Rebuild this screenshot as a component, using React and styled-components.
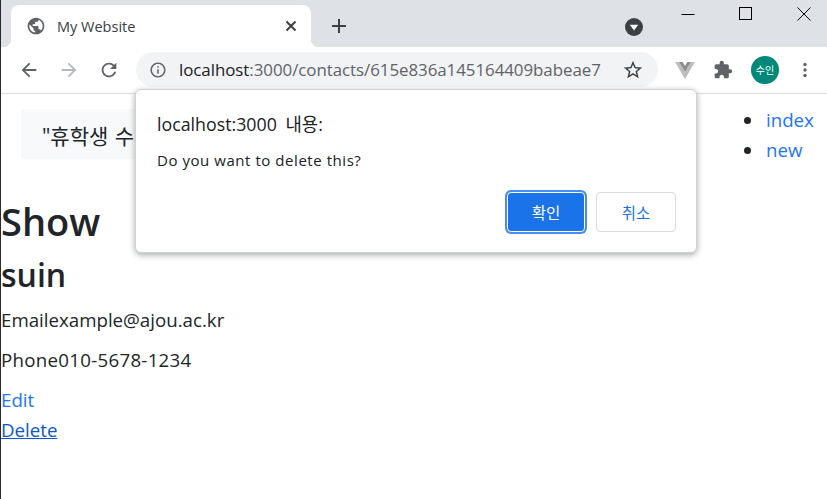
import React from "react";
import styled, { createGlobalStyle } from "styled-components";

const GlobalStyle = createGlobalStyle`
  html, body {
    margin: 0;
    padding: 0;
    background: #fff;
    overflow: hidden;
  }
  * { box-sizing: border-box; }
`;

const FONT = `"Open Sans", "Noto Sans CJK KR", sans-serif`;

const Window = styled.div`
  width: 827px;
  height: 499px;
  position: relative;
  overflow: hidden;
  border-left: 1px solid #2a2a2a;
  font-family: ${FONT};
  color: #212529;
`;

const TabStrip = styled.div`
  height: 47px;
  background: #dee1e6;
  display: flex;
  align-items: flex-end;
  padding-left: 10px;
`;

const Tab = styled.div`
  position: relative;
  width: 300px;
  height: 42px;
  background: #fff;
  border-radius: 8px 8px 0 0;
  display: flex;
  align-items: center;
  padding: 0 14px 0 15px;
  gap: 11px;

  &::before,
  &::after {
    content: "";
    position: absolute;
    bottom: 0;
    width: 8px;
    height: 8px;
  }
  &::before {
    left: -8px;
    background: radial-gradient(circle at 0 0, transparent 8px, #fff 8.5px);
  }
  &::after {
    right: -8px;
    background: radial-gradient(circle at 100% 0, transparent 8px, #fff 8.5px);
  }
`;

const TabTitle = styled.span`
  flex: 1;
  font-size: 14.5px;
  color: #3c4043;
`;

const NewTab = styled.div`
  display: flex;
  width: 28px;
  height: 42px;
  align-items: center;
  justify-content: center;
  margin-left: 14px;
`;

const StripSpacer = styled.div`
  flex: 1;
`;

const TabSearch = styled.div`
  align-self: flex-start;
  margin: 18px 16px 0 0;
  display: flex;
`;

const WindowControls = styled.div`
  align-self: flex-start;
  display: flex;
  margin-right: -6px;
`;

const WindowButton = styled.div`
  width: 58px;
  height: 27px;
  display: flex;
  align-items: center;
  justify-content: center;
`;

const Toolbar = styled.div`
  height: 47px;
  background: #fff;
  border-bottom: 1px solid #dadce0;
  display: flex;
  align-items: center;
  padding: 0 0 1px 17px;
`;

const NavButton = styled.div`
  width: 40px;
  display: flex;
  align-items: center;
  justify-content: flex-start;
`;

const Omnibox = styled.div`
  width: 522px;
  height: 35px;
  margin-left: -2px;
  border-radius: 18px;
  background: #f1f3f4;
  display: flex;
  align-items: center;
  padding: 0 14px 0 13px;
`;

const Url = styled.div`
  flex: 1;
  margin-left: 12px;
  font-size: 16.9px;
  letter-spacing: -0.05px;
  color: #5f6368;
  white-space: nowrap;
`;

const Host = styled.span`
  color: #202124;
`;

const ToolbarIcons = styled.div`
  display: flex;
  align-items: center;
  margin-left: 17px;
  gap: 18px;
`;

const Avatar = styled.div`
  width: 28px;
  height: 28px;
  border-radius: 50%;
  background: #00897b;
  color: #fff;
  font-size: 10px;
  display: flex;
  align-items: center;
  justify-content: center;
`;

const Page = styled.div`
  display: flex;
  justify-content: space-between;
  align-items: flex-start;
`;

const Main = styled.main`
  flex: 1;
  padding-top: 15px;
  font-size: 18.7px;
  line-height: 30px;
`;

const Notice = styled.div`
  width: 560px;
  height: 50px;
  margin: 0 0 38px 20px;
  padding: 3px 0 0 21px;
  background: #f8f9fa;
  display: flex;
  align-items: center;
  font-size: 21px;
  word-spacing: 1px;
`;

const Title = styled.h1`
  margin: 0;
  font-size: 38px;
  font-weight: 600;
  line-height: 48px;
`;

const Name = styled.h2`
  margin: 10px 0 10px;
  font-size: 32px;
  font-weight: 600;
  line-height: 40px;
`;

const Field = styled.p`
  margin: 0 0 10px;
  letter-spacing: ${(p) => (p.$wide ? "0.28px" : "0")};
`;

const LinkRow = styled.div`
  height: 30px;
`;

const Anchor = styled.a`
  color: ${(p) => (p.$hover ? "#0a58ca" : "#1f75f8")};
  text-decoration: ${(p) => (p.$hover ? "underline" : "none")};
`;

const SideNav = styled.ul`
  width: 111px;
  margin: 11px 0 0;
  padding: 0 0 0 48px;
  font-size: 18.7px;
  line-height: 30px;
`;

const NavItem = styled.li`
  padding-left: 2px;
`;

const Dialog = styled.div`
  position: absolute;
  left: 134px;
  top: 89px;
  width: 562px;
  height: 164px;
  background: #fff;
  border: 1px solid #d0d1d3;
  border-radius: 6px;
  box-shadow: 0 2px 6px rgba(60, 64, 67, 0.45);
  padding: 20px 20px 20px 21px;
  display: flex;
  flex-direction: column;
`;

const DialogTitle = styled.div`
  font-size: 17.8px;
  word-spacing: 4px;
  line-height: 28px;
  color: #202124;
`;

const DialogText = styled.div`
  margin-top: 12px;
  font-size: 15px;
  letter-spacing: 0.55px;
  line-height: 20px;
  color: #202124;
`;

const DialogActions = styled.div`
  margin-top: auto;
  display: flex;
  justify-content: flex-end;
  gap: 11px;
`;

const DialogButton = styled.button`
  width: ${(p) => (p.$primary ? "78px" : "80px")};
  height: 40px;
  border-radius: 4px;
  font-family: ${FONT};
  font-size: 15.5px;
  padding: 0;
  border: 1px solid ${(p) => (p.$primary ? "#fff" : "#dadce0")};
  background: ${(p) => (p.$primary ? "#1a73e8" : "#fff")};
  color: ${(p) => (p.$primary ? "#fff" : "#1a73e8")};
  box-shadow: ${(p) => (p.$primary ? "0 0 0 2px #4a8cf0" : "none")};
`;

const Icon = ({ d, size = 24, fill = "#5f6368" }) => (
  <svg width={size} height={size} viewBox="0 0 24 24" fill={fill}>
    <path d={d} />
  </svg>
);

const GLOBE =
  "M12 2C6.48 2 2 6.48 2 12s4.48 10 10 10 10-4.48 10-10S17.52 2 12 2zm-1 17.93c-3.95-.49-7-3.85-7-7.93 0-.62.08-1.21.21-1.79L9 15v1c0 1.1.9 2 2 2v1.93zm6.9-2.54c-.26-.81-1-1.39-1.9-1.39h-1v-3c0-.55-.45-1-1-1H8v-2h2c.55 0 1-.45 1-1V7h2c1.1 0 2-.9 2-2v-.41c2.93 1.19 5 4.06 5 7.41 0 2.08-.8 3.97-2.1 5.39z";
const ARROW = "M20 11H7.83l5.59-5.59L12 4l-8 8 8 8 1.41-1.41L7.83 13H20v-2z";
const RELOAD =
  "M17.65 6.35C16.2 4.9 14.21 4 12 4c-4.42 0-7.99 3.58-7.99 8s3.57 8 7.99 8c3.73 0 6.84-2.55 7.73-6h-2.08c-.82 2.33-3.04 4-5.65 4-3.31 0-6-2.69-6-6s2.69-6 6-6c1.66 0 3.14.69 4.22 1.78L13 11h7V4l-2.35 2.35z";
const INFO =
  "M11 7h2v2h-2zm0 4h2v6h-2zm1-9C6.48 2 2 6.48 2 12s4.48 10 10 10 10-4.48 10-10S17.52 2 12 2zm0 18c-4.41 0-8-3.59-8-8s3.59-8 8-8 8 3.59 8 8-3.59 8-8 8z";
const STAR =
  "M22 9.24l-7.19-.62L12 2 9.19 8.63 2 9.24l5.46 4.73L5.82 21 12 17.27 18.18 21l-1.63-7.03L22 9.24zM12 15.4l-3.76 2.27 1-4.28-3.32-2.88 4.38-.38L12 6.1l1.71 4.04 4.38.38-3.32 2.88 1 4.28L12 15.4z";
const PUZZLE =
  "M20.5 11H19V7c0-1.1-.9-2-2-2h-4V3.5C13 2.12 11.88 1 10.5 1S8 2.12 8 3.5V5H4c-1.1 0-1.99.9-1.99 2v3.8H3.5c1.49 0 2.7 1.21 2.7 2.7s-1.21 2.7-2.7 2.7H2V20c0 1.1.9 2 2 2h3.8v-1.5c0-1.49 1.21-2.7 2.7-2.7 1.49 0 2.7 1.21 2.7 2.7V22H17c1.1 0 2-.9 2-2v-4h1.5c1.38 0 2.5-1.12 2.5-2.5S21.88 11 20.5 11z";

const VueMark = () => (
  <svg width="20" height="18" viewBox="0 0 22 20">
    <path d="M0 1h4.4L11 12.2 17.6 1H22L11 20z" fill="#bdbdbd" />
    <path d="M4.4 1h4L11 5.6 13.6 1h4L11 12.2z" fill="#8c8c8c" />
  </svg>
);

const Dots = () => (
  <svg width="16" height="16" viewBox="0 0 16 16" fill="#5f6368">
    <circle cx="8" cy="2.5" r="1.7" />
    <circle cx="8" cy="8" r="1.7" />
    <circle cx="8" cy="13.5" r="1.7" />
  </svg>
);

const App = () => (
  <Window>
    <GlobalStyle />
    <TabStrip>
      <Tab>
        <Icon d={GLOBE} size={20} />
        <TabTitle>My Website</TabTitle>
        <svg width="12" height="12" viewBox="0 0 12 12" stroke="#3c4043" strokeWidth="2">
          <path d="M1.5 1.5l9 9M10.5 1.5l-9 9" />
        </svg>
      </Tab>
      <NewTab>
        <svg width="16" height="16" viewBox="0 0 16 16" stroke="#3c4043" strokeWidth="2">
          <path d="M8 1v14M1 8h14" />
        </svg>
      </NewTab>
      <StripSpacer />
      <TabSearch>
        <svg width="18" height="18" viewBox="0 0 18 18">
          <circle cx="9" cy="9" r="9" fill="#3c4043" />
          <path d="M4.8 6.8h8.4L9 12.4z" fill="#fff" />
        </svg>
      </TabSearch>
      <WindowControls>
        <WindowButton>
          <svg width="14" height="14" viewBox="0 0 14 14" stroke="#000">
            <path d="M0.5 7.5h13" />
          </svg>
        </WindowButton>
        <WindowButton>
          <svg width="14" height="14" viewBox="0 0 14 14" stroke="#000" fill="none">
            <rect x="0.5" y="0.5" width="12" height="12" />
          </svg>
        </WindowButton>
        <WindowButton>
          <svg width="14" height="14" viewBox="0 0 14 14" stroke="#000">
            <path d="M0.5 0.5l13 13M13.5 0.5l-13 13" />
          </svg>
        </WindowButton>
      </WindowControls>
    </TabStrip>

    <Toolbar>
      <NavButton>
        <Icon d={ARROW} size={22} />
      </NavButton>
      <NavButton>
        <svg width="22" height="22" viewBox="0 0 24 24" fill="#b4b7bb" style={{ transform: "scaleX(-1)" }}>
          <path d={ARROW} />
        </svg>
      </NavButton>
      <NavButton>
        <Icon d={RELOAD} size={22} />
      </NavButton>
      <Omnibox>
        <Icon d={INFO} size={18} />
        <Url>
          <Host>localhost</Host>:3000/contacts/615e836a145164409babeae7
        </Url>
        <Icon d={STAR} size={22} fill="#3c4043" />
      </Omnibox>
      <ToolbarIcons>
        <VueMark />
        <Icon d={PUZZLE} size={20} />
        <Avatar>수인</Avatar>
        <Dots />
      </ToolbarIcons>
    </Toolbar>

    <Page>
      <Main>
        <Notice>"휴학생 수</Notice>
        <Title>Show</Title>
        <Name>suin</Name>
        <Field>Emailexample@ajou.ac.kr</Field>
        <Field $wide>Phone010-5678-1234</Field>
        <LinkRow>
          <Anchor href="#edit">Edit</Anchor>
        </LinkRow>
        <LinkRow>
          <Anchor href="#delete" $hover>
            Delete
          </Anchor>
        </LinkRow>
      </Main>
      <SideNav>
        <NavItem>
          <Anchor href="#index">index</Anchor>
        </NavItem>
        <NavItem>
          <Anchor href="#new">new</Anchor>
        </NavItem>
      </SideNav>
    </Page>

    <Dialog>
      <DialogTitle>localhost:3000 내용:</DialogTitle>
      <DialogText>Do you want to delete this?</DialogText>
      <DialogActions>
        <DialogButton $primary>확인</DialogButton>
        <DialogButton>취소</DialogButton>
      </DialogActions>
    </Dialog>
  </Window>
);

export default App;
